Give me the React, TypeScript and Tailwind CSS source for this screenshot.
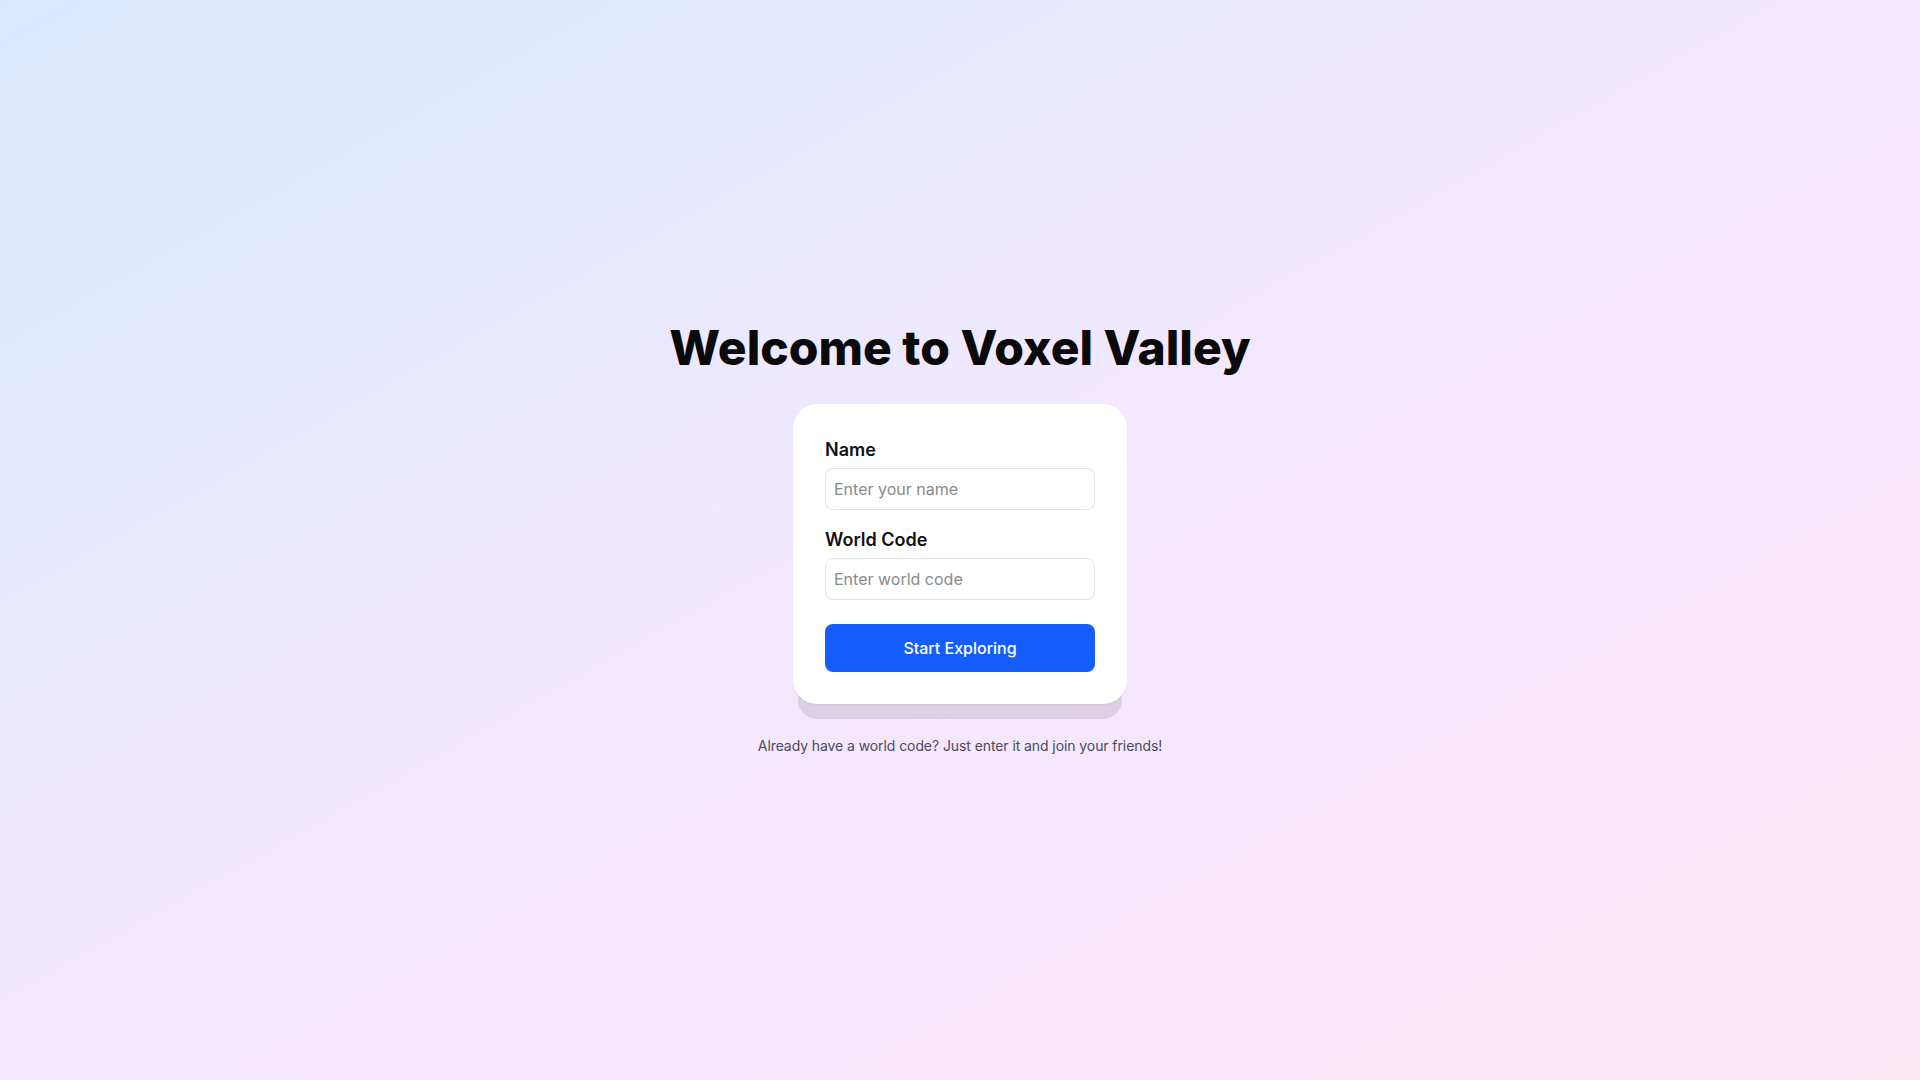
export default function App() {
  return (
    <div
      className="min-h-screen w-full flex flex-col items-center justify-center bg-gradient-to-br from-blue-100 via-purple-100 to-pink-100"
      style={{ fontFamily: "Inter, 'Noto Sans', sans-serif" }}
    >
      <h1 className="text-5xl font-extrabold text-[#0a0a0a] leading-none mb-8">
        Welcome to Voxel Valley
      </h1>
      <div className="w-[334px] bg-white rounded-3xl p-8 shadow-[0_20px_0_-5px_rgba(0,0,0,0.1),0_1px_2px_rgba(0,0,0,0.06)]">
        <div className="flex flex-col">
          <label className="text-lg font-semibold text-[#111] leading-7 mb-1">Name</label>
          <input
            type="text"
            placeholder="Enter your name"
            className="w-full h-[42px] px-2 border border-[#e3e3e6] rounded-lg text-base text-[#111] placeholder:text-[#8a8a8a] outline-none"
          />
          <label className="text-lg font-semibold text-[#111] leading-7 mb-1 mt-4">World Code</label>
          <input
            type="text"
            placeholder="Enter world code"
            className="w-full h-[42px] px-2 border border-[#e3e3e6] rounded-lg text-base text-[#111] placeholder:text-[#8a8a8a] outline-none"
          />
          <button className="mt-6 w-full h-12 rounded-lg bg-[#165dff] text-white text-base font-medium">
            Start Exploring
          </button>
        </div>
      </div>
      <p className="mt-8 text-sm leading-5 tracking-[-0.006em] text-[#4a4a5a]">
        Already have a world code? Just enter it and join your friends!
      </p>
    </div>
  );
}
